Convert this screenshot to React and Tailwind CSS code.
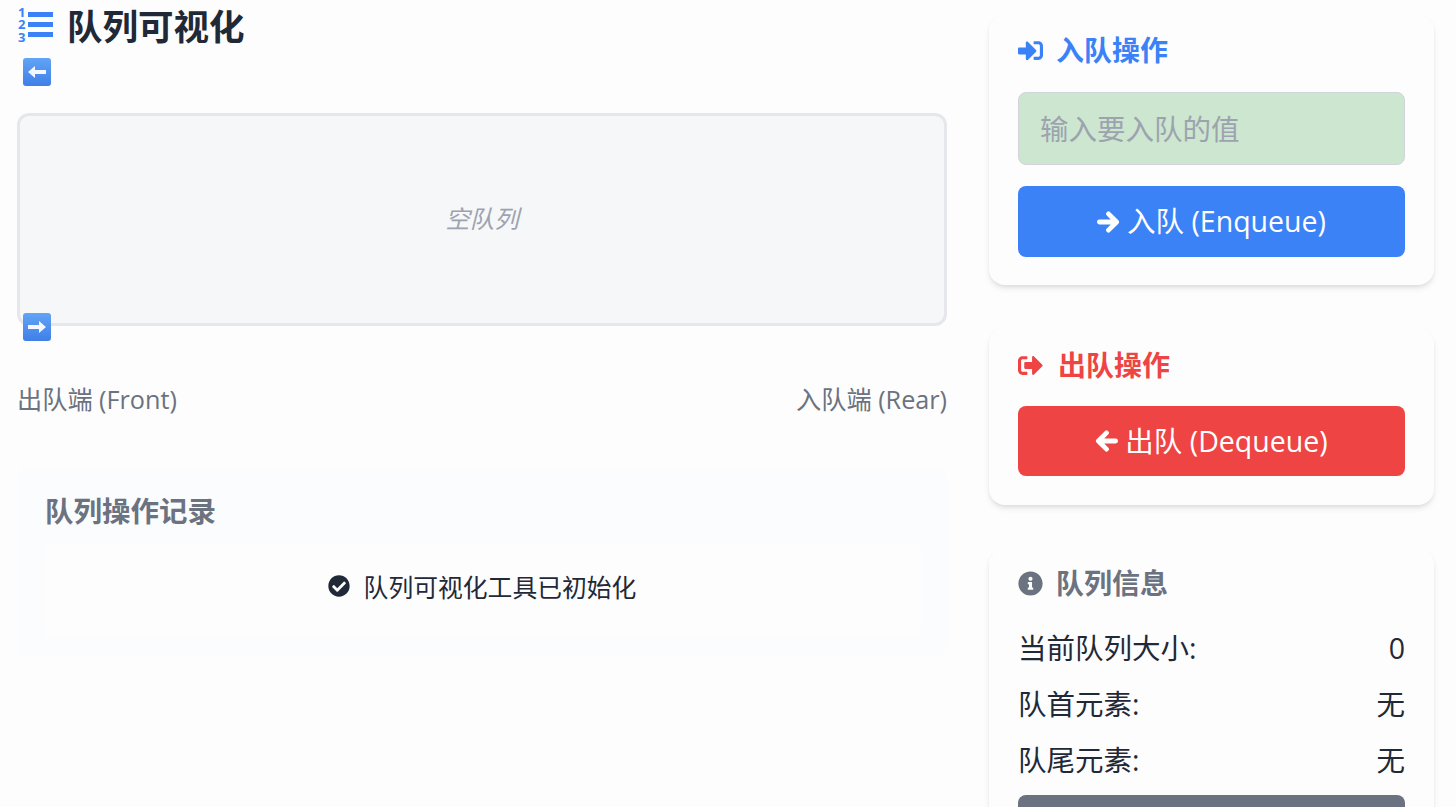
import { FaSignInAlt, FaSignOutAlt, FaInfoCircle, FaCheckCircle } from "react-icons/fa";

const fontStack = "font-['Open_Sans','Noto_Sans_CJK_SC',sans-serif]";

// numbered list icon: the package versions have thinner bars or only two numbers
const ListIcon = () => (
  <svg viewBox="0 0 36 36" className="w-9 h-9 overflow-visible text-[#3b82f6]" fill="currentColor">
    <rect x="11" y="3" width="25" height="5" />
    <rect x="11" y="13" width="25" height="5" />
    <rect x="11" y="23" width="25" height="5" />
    <text x="1" y="8" fontSize="13" fontWeight="700">1</text>
    <text x="1" y="20" fontSize="13" fontWeight="700">2</text>
    <text x="1" y="33" fontSize="13" fontWeight="700">3</text>
  </svg>
);

// arrow key-cap emoji, the picture shows them as little blue tiles
const ArrowTile = ({ dir, className }) => (
  <svg viewBox="0 0 28 28" className={`w-7 h-7 ${className || ""}`}>
    <defs>
      <linearGradient id={`tile-${dir}`} x1="0" y1="0" x2="0" y2="1">
        <stop offset="0" stopColor="#62a4f5" />
        <stop offset="1" stopColor="#3f7fe8" />
      </linearGradient>
    </defs>
    <rect width="28" height="28" rx="3" fill={`url(#tile-${dir})`} />
    {dir === "left" ? (
      <path d="M5 14 L12 8 V12 H23 V16 H12 V20 Z" fill="#f4f7ff" />
    ) : (
      <path d="M23 14 L16 8 V12 H5 V16 H16 V20 Z" fill="#f4f7ff" />
    )}
  </svg>
);

// heavy rounded arrow used inside the two buttons
const ButtonArrow = ({ dir }) => (
  <svg viewBox="0 0 24 24" className="w-[23px] h-[24px]" fill="none" stroke="currentColor" strokeWidth="5" strokeLinecap="round" strokeLinejoin="round">
    {dir === "left" ? <path d="M21.5 12 H4 M12 3.5 L3.5 12 L12 20.5" /> : <path d="M2.5 12 H20 M12 3.5 L20.5 12 L12 20.5" />}
  </svg>
);

const InfoRow = ({ label, value }) => (
  <div className="flex justify-between items-center h-[56px] text-[28.5px] text-[#1f2937]">
    <span>{label}</span>
    <span>{value}</span>
  </div>
);

const App = () => {
  return (
    <div className={`${fontStack} h-screen overflow-hidden bg-[#fdfdfe] flex gap-[42px] pl-[17px] antialiased`}>
      {/* left column */}
      <div className="w-[930px] shrink-0">
        <div className="flex items-center h-[54px] gap-[14px]">
          <ListIcon />
          <h1 className="text-[35.5px] leading-none font-bold text-[#1f2937]">队列可视化</h1>
        </div>
        <ArrowTile dir="left" className="ml-[6px] mt-[4px] block" />

        <div className="relative mt-[27px] h-[213px] rounded-xl border-[3px] border-[#e5e7eb] bg-[#f6f7f9] flex items-center justify-center">
          <span className="italic text-[24.5px] text-[#9ca3af]">空队列</span>
          <ArrowTile dir="right" className="absolute left-[3px] -bottom-[18px]" />
        </div>

        <div className="flex justify-between mt-[55px] text-[25.2px] leading-[36px] text-[#6b7280]">
          <span>出队端 (Front)</span>
          <span>入队端 (Rear)</span>
        </div>

        <div className="mt-[50px] h-[190px] rounded-xl bg-[#fbfcfd] px-[26px] pt-[24px]">
          <h3 className="ml-[2px] text-[28.5px] leading-[40px] font-bold text-[#6b7280]">队列操作记录</h3>
          <div className="mt-[13px] h-[93px] pb-[5px] rounded-lg bg-[#fdfdfe] flex items-center justify-center gap-[14px] text-[24.8px] text-[#1f2937]">
            <FaCheckCircle className="text-[22px] -mt-[4px]" />
            <span>队列可视化工具已初始化</span>
          </div>
        </div>
      </div>

      {/* right column */}
      <div className="w-[445px] shrink-0 pt-[15px] flex flex-col gap-[43px]">
        <div className="shrink-0 h-[270px] rounded-2xl bg-[#fdfdfe] shadow-[0_4px_6px_-1px_rgba(0,0,0,0.1),0_2px_4px_-1px_rgba(0,0,0,0.06)] px-[29px] pt-[15px]">
          <div className="flex items-center gap-[13px] h-[40px] text-[#3b82f6]">
            <FaSignInAlt className="text-[25px]" />
            <h2 className="text-[28px] font-bold">入队操作</h2>
          </div>
          <input
            placeholder="输入要入队的值"
            className="mt-[22px] w-full h-[73px] rounded-lg border border-[#d1d5db] bg-[#cde6cf] px-[21px] text-[28.5px] outline-none placeholder:text-[#9ca3af]"
          />
          <button className="mt-[21px] w-full h-[71px] rounded-lg bg-[#3b82f6] text-white text-[28.5px] flex items-center justify-center gap-[7px]">
            <ButtonArrow dir="right" />
            入队 (Enqueue)
          </button>
        </div>

        <div className="shrink-0 h-[177px] rounded-2xl bg-[#fdfdfe] shadow-[0_4px_6px_-1px_rgba(0,0,0,0.1),0_2px_4px_-1px_rgba(0,0,0,0.06)] px-[29px] pt-[17px]">
          <div className="flex items-center gap-[15px] h-[40px] text-[#ef4444]">
            <FaSignOutAlt className="text-[25px]" />
            <h2 className="text-[28px] font-bold">出队操作</h2>
          </div>
          <button className="mt-[21px] w-full h-[70px] rounded-lg bg-[#ef4444] text-white text-[28.5px] flex items-center justify-center gap-[7px]">
            <ButtonArrow dir="left" />
            出队 (Dequeue)
          </button>
        </div>

        <div className="shrink-0 rounded-2xl bg-[#fdfdfe] shadow-[0_4px_6px_-1px_rgba(0,0,0,0.1),0_2px_4px_-1px_rgba(0,0,0,0.06)] px-[29px] pt-[15px]">
          <div className="flex items-center gap-[13px] h-[40px] text-[#6b7280]">
            <FaInfoCircle className="text-[25px]" />
            <h2 className="text-[28px] font-bold">队列信息</h2>
          </div>
          <div className="mt-[17px]">
            <InfoRow label="当前队列大小:" value="0" />
            <InfoRow label="队首元素:" value="无" />
            <InfoRow label="队尾元素:" value="无" />
          </div>
          <div className="mt-[7px] h-[70px] rounded-lg bg-[#6b7280]"></div>
        </div>
      </div>
    </div>
  );
};

export default App;
